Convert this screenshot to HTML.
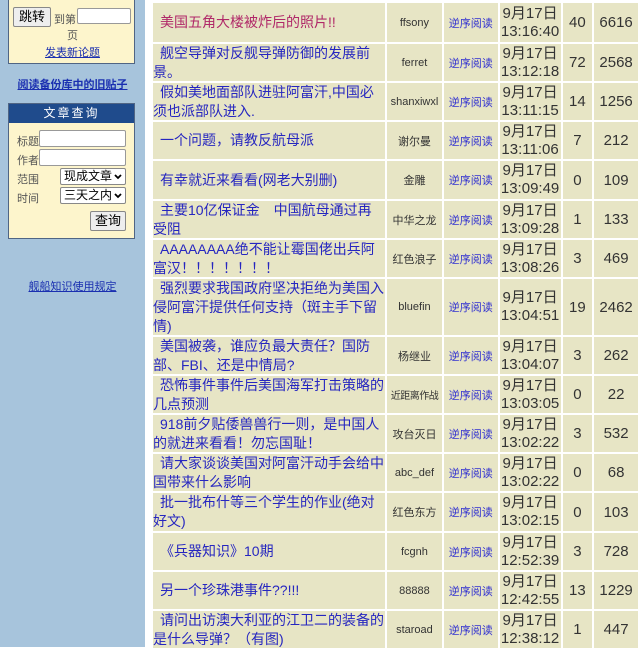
<!DOCTYPE html>
<html><head><meta charset="utf-8"><style>
body{margin:0;width:640px;height:647px;overflow:hidden;background:#fff;font-family:"Liberation Sans","Noto Sans CJK SC",sans-serif;position:relative}
#side{position:absolute;left:0;top:0;width:145px;height:647px;background:#a7c4dc}
.box{position:absolute;left:8px;width:125px;background:#fdf5cc;border:1px solid #506584}
.lnk{position:absolute;color:#1a2fb0;text-decoration:underline;font-size:11px;width:145px;text-align:center}
input.t{position:absolute;height:16px;border:1px solid #999;border-radius:2px;background:#fff;box-sizing:border-box}
.btn{position:absolute;border:1px solid #888;border-radius:2px;background:#eee;font-size:13px;text-align:center;box-sizing:border-box}
.lab{position:absolute;font-size:11px;color:#555;white-space:nowrap}
.sel{position:absolute;height:17px;border:1px solid #888;border-radius:2px;background:#fff;font-size:12px;box-sizing:border-box;padding-left:3px;line-height:15px;white-space:nowrap;overflow:hidden}
.sel svg{position:absolute;right:3px;top:5px}
table{position:absolute;left:151px;top:1px;border-collapse:separate;border-spacing:2px;table-layout:fixed;background:#fff}
td{background:#e7e5c5;padding:0;overflow:hidden}
td>div{height:37px;overflow:hidden;display:flex;align-items:center;justify-content:center;text-align:center}
tr.b td>div{height:39px}
tr.c td>div{height:38px}
tr.e td>div{height:56px}
td.ti>div{justify-content:flex-start;text-align:left;font-size:14px;line-height:19px;color:#2626c0;text-indent:7px}
td.a{font-size:11px;color:#333;white-space:nowrap}
td.r{font-size:11px;color:#3030d0;white-space:nowrap}
td.d{font-size:15px;line-height:18px;color:#333}
td.n{font-size:15px;color:#333}
</style></head><body>
<div id="side">
 <div class="box" style="top:-2px;height:64px">
  <div class="btn" style="left:4px;top:8px;width:38px;height:20px;line-height:18px">跳转</div>
  <div class="lab" style="left:45px;top:12px">到第</div>
  <input class="t" style="left:68px;top:9px;width:54px">
  <div class="lab" style="left:58px;top:28px">页</div>
  <div class="lab" style="left:36px;top:45px;color:#1a2fb0;text-decoration:underline">发表新论题</div>
 </div>
 <div class="lnk" style="top:76px;font-weight:bold">阅读备份库中的旧贴子</div>
 <div class="box" style="top:103px;height:134px">
  <div style="background:#1f4b8c;color:#fff;font-size:12px;text-align:center;height:19px;line-height:19px;letter-spacing:2px">文章查询</div>
  <div class="lab" style="left:8px;top:29px">标题</div><input class="t" style="left:30px;top:26px;width:87px;height:17px">
  <div class="lab" style="left:8px;top:48px">作者</div><input class="t" style="left:30px;top:45px;width:87px;height:17px">
  <div class="lab" style="left:8px;top:67px">范围</div><div class="sel" style="left:51px;top:64px;width:66px">现成文章<svg width="8" height="6" viewBox="0 0 8 6"><path d="M1 1l3 3 3-3" stroke="#000" stroke-width="1.8" fill="none"/></svg></div>
  <div class="lab" style="left:8px;top:86px">时间</div><div class="sel" style="left:51px;top:83px;width:66px">三天之内<svg width="8" height="6" viewBox="0 0 8 6"><path d="M1 1l3 3 3-3" stroke="#000" stroke-width="1.8" fill="none"/></svg></div>
  <div class="btn" style="left:81px;top:107px;width:36px;height:20px;line-height:18px">查询</div>
 </div>
 <div class="lnk" style="top:278px">舰船知识使用规定</div>
</div>
<table>
<colgroup><col style="width:235px"><col style="width:55px"><col style="width:54px"><col style="width:61px"><col style="width:30px"><col style="width:44px"></colgroup>
<tr class="b"><td class="ti"><div style="color:#b02868">美国五角大楼被炸后的照片!!</div></td><td class="a"><div>ffsony</div></td><td class="r"><div>逆序阅读</div></td><td class="d"><div>9月17日<br>13:16:40</div></td><td class="n"><div>40</div></td><td class="n"><div>6616</div></td></tr>
<tr><td class="ti"><div>舰空导弹对反舰导弹防御的发展前景。</div></td><td class="a"><div>ferret</div></td><td class="r"><div>逆序阅读</div></td><td class="d"><div>9月17日<br>13:12:18</div></td><td class="n"><div>72</div></td><td class="n"><div>2568</div></td></tr>
<tr><td class="ti"><div>假如美地面部队进驻阿富汗,中国必须也派部队进入.</div></td><td class="a"><div>shanxiwxl</div></td><td class="r"><div>逆序阅读</div></td><td class="d"><div>9月17日<br>13:11:15</div></td><td class="n"><div>14</div></td><td class="n"><div>1256</div></td></tr>
<tr><td class="ti"><div>一个问题，请教反航母派</div></td><td class="a"><div>谢尔曼</div></td><td class="r"><div>逆序阅读</div></td><td class="d"><div>9月17日<br>13:11:06</div></td><td class="n"><div>7</div></td><td class="n"><div>212</div></td></tr>
<tr class="c"><td class="ti"><div>有幸就近来看看(网老大别删)</div></td><td class="a"><div>金雕</div></td><td class="r"><div>逆序阅读</div></td><td class="d"><div>9月17日<br>13:09:49</div></td><td class="n"><div>0</div></td><td class="n"><div>109</div></td></tr>
<tr><td class="ti"><div>主要10亿保证金　中国航母通过再受阻</div></td><td class="a"><div>中华之龙</div></td><td class="r"><div>逆序阅读</div></td><td class="d"><div>9月17日<br>13:09:28</div></td><td class="n"><div>1</div></td><td class="n"><div>133</div></td></tr>
<tr><td class="ti"><div>AAAAAAAA绝不能让霉国佬出兵阿富汉！！！！！！！</div></td><td class="a"><div>红色浪子</div></td><td class="r"><div>逆序阅读</div></td><td class="d"><div>9月17日<br>13:08:26</div></td><td class="n"><div>3</div></td><td class="n"><div>469</div></td></tr>
<tr class="e"><td class="ti"><div>强烈要求我国政府坚决拒绝为美国入侵阿富汗提供任何支持（斑主手下留情)</div></td><td class="a"><div>bluefin</div></td><td class="r"><div>逆序阅读</div></td><td class="d"><div>9月17日<br>13:04:51</div></td><td class="n"><div>19</div></td><td class="n"><div>2462</div></td></tr>
<tr><td class="ti"><div>美国被袭，谁应负最大责任？国防部、FBI、还是中情局?</div></td><td class="a"><div>杨继业</div></td><td class="r"><div>逆序阅读</div></td><td class="d"><div>9月17日<br>13:04:07</div></td><td class="n"><div>3</div></td><td class="n"><div>262</div></td></tr>
<tr><td class="ti"><div>恐怖事件事件后美国海军打击策略的几点预测</div></td><td class="a"><div style="font-size:10px;letter-spacing:-0.5px">近距离作战</div></td><td class="r"><div>逆序阅读</div></td><td class="d"><div>9月17日<br>13:03:05</div></td><td class="n"><div>0</div></td><td class="n"><div>22</div></td></tr>
<tr><td class="ti"><div>918前夕贴倭兽兽行一则，是中国人的就进来看看！勿忘国耻！</div></td><td class="a"><div>攻台灭日</div></td><td class="r"><div>逆序阅读</div></td><td class="d"><div>9月17日<br>13:02:22</div></td><td class="n"><div>3</div></td><td class="n"><div>532</div></td></tr>
<tr><td class="ti"><div>请大家谈谈美国对阿富汗动手会给中国带来什么影响</div></td><td class="a"><div>abc_def</div></td><td class="r"><div>逆序阅读</div></td><td class="d"><div>9月17日<br>13:02:22</div></td><td class="n"><div>0</div></td><td class="n"><div>68</div></td></tr>
<tr class="c"><td class="ti"><div>批一批布什等三个学生的作业(绝对好文)</div></td><td class="a"><div>红色东方</div></td><td class="r"><div>逆序阅读</div></td><td class="d"><div>9月17日<br>13:02:15</div></td><td class="n"><div>0</div></td><td class="n"><div>103</div></td></tr>
<tr><td class="ti"><div>《兵器知识》10期</div></td><td class="a"><div>fcgnh</div></td><td class="r"><div>逆序阅读</div></td><td class="d"><div>9月17日<br>12:52:39</div></td><td class="n"><div>3</div></td><td class="n"><div>728</div></td></tr>
<tr><td class="ti"><div>另一个珍珠港事件??!!!</div></td><td class="a"><div>88888</div></td><td class="r"><div>逆序阅读</div></td><td class="d"><div>9月17日<br>12:42:55</div></td><td class="n"><div>13</div></td><td class="n"><div>1229</div></td></tr>
<tr><td class="ti"><div>请问出访澳大利亚的江卫二的装备的是什么导弹？（有图)</div></td><td class="a"><div>staroad</div></td><td class="r"><div>逆序阅读</div></td><td class="d"><div>9月17日<br>12:38:12</div></td><td class="n"><div>1</div></td><td class="n"><div>447</div></td></tr>
</table>
</body></html>
